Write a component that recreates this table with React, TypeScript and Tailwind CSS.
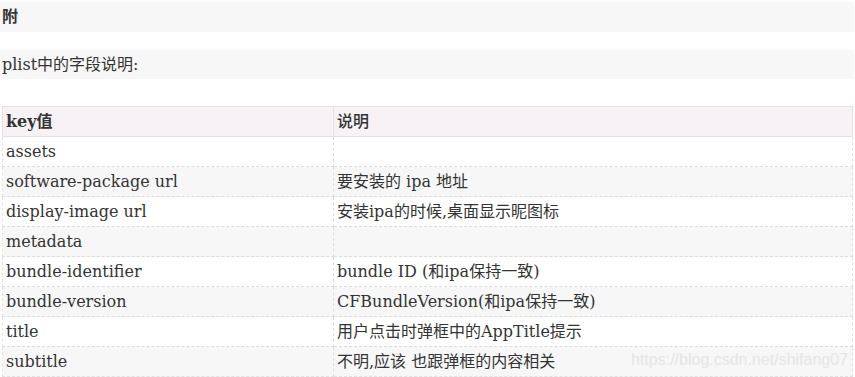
const rows: [string, string][] = [
  ['assets', ''],
  ['software-package url', '要安装的 ipa 地址'],
  ['display-image url', '安装ipa的时候,桌面显示昵图标'],
  ['metadata', ''],
  ['bundle-identifier', 'bundle ID (和ipa保持一致)'],
  ['bundle-version', 'CFBundleVersion(和ipa保持一致)'],
  ['title', '用户点击时弹框中的AppTitle提示'],
  ['subtitle', '不明,应该 也跟弹框的内容相关'],
];

export default function App() {
  return (
    <div className="relative w-[855px] h-[377px] overflow-hidden bg-white text-[#333] font-['DejaVu_Serif','Noto_Sans_CJK_SC',serif] text-[16px]">
      <div className="mt-[2px] flex h-[30px] w-[854px] items-center bg-[#f7f7f7] px-[2px] font-bold">附</div>
      <div className="mt-[18px] flex h-[29px] w-[854px] items-center bg-[#f7f7f7] px-[2px]">plist中的字段说明:</div>

      <table className="ml-[2px] mt-[27px] w-[851px] table-fixed border-collapse">
        <thead>
          <tr className="bg-[#f6f2f6]">
            <th className="h-[30px] w-[331px] border border-solid border-[#e6e0e6] px-[3px] py-0 text-left align-middle font-bold">
              key值
            </th>
            <th className="h-[30px] border border-solid border-[#e6e0e6] px-[3px] py-0 text-left align-middle font-medium">
              说明
            </th>
          </tr>
        </thead>
        <tbody>
          {rows.map(([k, v], i) => (
            <tr key={k} className={i % 2 === 1 ? 'bg-[#f7f7f7]' : 'bg-white'}>
              <td
                className={`h-[30px] border-y border-r border-dashed border-[#dcdcdc] border-l border-l-solid border-l-[#e2e2e2] px-[3px] py-0 align-middle ${
                  i === rows.length - 1 ? 'border-b-solid border-b-[#e2e2e2]' : ''
                }`}
              >
                {k}
              </td>
              <td
                className={`h-[30px] border-y border-l border-dashed border-[#dcdcdc] border-r border-r-solid border-r-[#e2e2e2] px-[3px] py-0 align-middle ${
                  i === rows.length - 1 ? 'border-b-solid border-b-[#e2e2e2]' : ''
                }`}
              >
                {v}
              </td>
            </tr>
          ))}
        </tbody>
      </table>

      <div className="absolute left-[631px] top-[349px] font-['Liberation_Sans',sans-serif] text-[16px] leading-[22px] text-[#e6e6e6]">
        https://blog.csdn.net/shifang07
      </div>
    </div>
  );
}
